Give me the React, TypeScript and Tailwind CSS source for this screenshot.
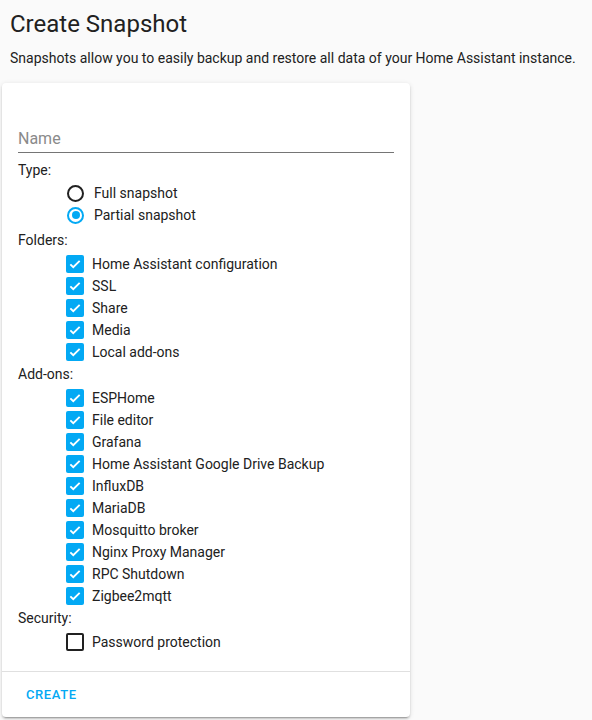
import React from "react"

const folders = ["Home Assistant configuration", "SSL", "Share", "Media", "Local add-ons"]
const addons = [
  "ESPHome",
  "File editor",
  "Grafana",
  "Home Assistant Google Drive Backup",
  "InfluxDB",
  "MariaDB",
  "Mosquitto broker",
  "Nginx Proxy Manager",
  "RPC Shutdown",
  "Zigbee2mqtt",
]

const Check = ({ checked, label }: { checked: boolean; label: string }) => (
  <div className="flex h-[22px] items-center pl-[48px]">
    {checked ? (
      <span className="flex h-[18px] w-[18px] items-center justify-center rounded-[2px] bg-[#03a9f4]">
        <svg width="14" height="14" viewBox="0 0 24 24" fill="none" stroke="white" strokeWidth="3.2">
          <path d="M4 12.5l5 5L20 6.5" />
        </svg>
      </span>
    ) : (
      <span className="h-[18px] w-[18px] rounded-[2px] border-2 border-[#212121]" />
    )}
    <span className="ml-[8px] text-sm text-[#212121]">{label}</span>
  </div>
)

const Radio = ({ checked, label }: { checked: boolean; label: string }) => (
  <div className="flex h-[22px] items-center pl-[49px]">
    {checked ? (
      <span className="flex h-[17px] w-[17px] items-center justify-center rounded-full border-2 border-[#03a9f4]">
        <span className="h-[8px] w-[8px] rounded-full bg-[#03a9f4]" />
      </span>
    ) : (
      <span className="h-[17px] w-[17px] rounded-full border-2 border-[#212121]" />
    )}
    <span className="ml-[10px] text-sm text-[#212121]">{label}</span>
  </div>
)

const Heading = ({ children }: { children: React.ReactNode }) => (
  <div className="h-5 text-sm leading-5 text-[#212121]">{children}</div>
)

export default function App() {
  return (
    <div className="min-h-screen bg-[#fafafa] font-['Roboto',sans-serif] text-[#212121]">
      <div className="px-[10px] pt-[8px]">
        <h1 className="text-2xl leading-8 font-normal">Create Snapshot</h1>
        <p className="mt-2 text-sm leading-5">
          Snapshots allow you to easily backup and restore all data of your Home Assistant instance.
        </p>
      </div>

      <div className="ml-[2px] mt-[15px] w-[408px] rounded bg-white shadow-[0_2px_2px_0_rgba(0,0,0,0.14),0_1px_5px_0_rgba(0,0,0,0.12),0_3px_1px_-2px_rgba(0,0,0,0.2)]">
        <div className="px-4 pt-4 pb-[18px]">
          <div className="border-b border-[#757575] pt-[28px] pb-[1px] text-base leading-6 text-[#8a8a8a]">
            Name
          </div>

          <div className="mt-[7px]">
            <Heading>Type:</Heading>
            <div className="mt-[2px] mb-[4px]">
              <Radio checked={false} label="Full snapshot" />
              <Radio checked={true} label="Partial snapshot" />
            </div>
          </div>

          <Heading>Folders:</Heading>
          <div className="mt-[3px] mb-[1px]">
            {folders.map((f) => (
              <Check key={f} checked={true} label={f} />
            ))}
          </div>

          <Heading>Add-ons:</Heading>
          <div className="mt-[3px] mb-[1px]">
            {addons.map((a) => (
              <Check key={a} checked={true} label={a} />
            ))}
          </div>

          <Heading>Security:</Heading>
          <div className="mt-[3px]">
            <Check checked={false} label="Password protection" />
          </div>
        </div>

        <div className="flex h-[46px] items-center border-t border-[#e0e0e0] px-2">
          <button className="px-4 text-[13px] font-medium tracking-[0.6px] text-[#03a9f4]">CREATE</button>
        </div>
      </div>
    </div>
  )
}
